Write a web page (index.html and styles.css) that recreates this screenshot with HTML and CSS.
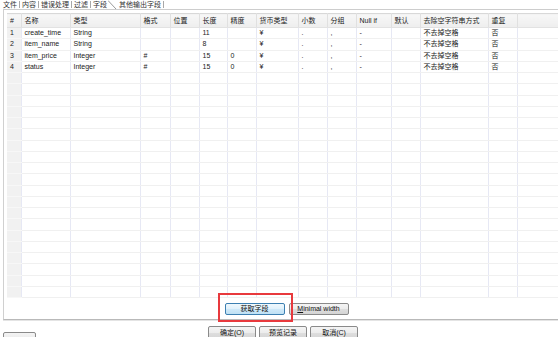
FILE: index.html
```html
<!DOCTYPE html>
<html lang="zh">
<head>
    <meta charset="UTF-8">
    <meta name="viewport" content="width=device-width, initial-scale=1.0">
    <title>字段</title>
    <link rel="stylesheet" href="styles.css">
</head>
<body>

<div class="tabs">
    <span class="tab">文件</span>
    <span class="tab">内容</span>
    <span class="tab">错误处理</span>
    <span class="tab">过滤</span>
    <span class="tab tab-active">字段<svg class="tab-slant" width="9" height="9" viewBox="0 0 9 9"><line x1="0" y1="0.5" x2="8" y2="9" stroke="#9a9a9a" stroke-width="1"/></svg></span>
    <span class="tab">其他输出字段</span>
</div>

<div class="panel">
    <table class="grid" id="fields">
        <colgroup>
            <col style="width:14px"><col style="width:49px"><col style="width:70px"><col style="width:30px">
            <col style="width:29px"><col style="width:28px"><col style="width:29px"><col style="width:42px">
            <col style="width:29px"><col style="width:29px"><col style="width:35px"><col style="width:29px">
            <col style="width:68px"><col style="width:29px"><col style="width:60px">
        </colgroup>
        <thead>
            <tr>
                <th class="num">#</th><th>名称</th><th>类型</th><th>格式</th><th>位置</th><th>长度</th><th>精度</th>
                <th>货币类型</th><th>小数</th><th>分组</th><th>Null if</th><th>默认</th><th>去除空字符串方式</th><th>重复</th><th></th>
            </tr>
        </thead>
        <tbody>
            <tr>
                <td class="num">1</td><td>create_time</td><td>String</td><td></td><td></td><td>11</td><td></td>
                <td>¥</td><td>.</td><td>,</td><td>-</td><td></td><td>不去掉空格</td><td>否</td><td></td>
            </tr>
            <tr>
                <td class="num">2</td><td>item_name</td><td>String</td><td></td><td></td><td>8</td><td></td>
                <td>¥</td><td>.</td><td>,</td><td>-</td><td></td><td>不去掉空格</td><td>否</td><td></td>
            </tr>
            <tr>
                <td class="num">3</td><td>item_price</td><td>Integer</td><td>#</td><td></td><td>15</td><td>0</td>
                <td>¥</td><td>.</td><td>,</td><td>-</td><td></td><td>不去掉空格</td><td>否</td><td></td>
            </tr>
            <tr>
                <td class="num">4</td><td>status</td><td>Integer</td><td>#</td><td></td><td>15</td><td>0</td>
                <td>¥</td><td>.</td><td>,</td><td>-</td><td></td><td>不去掉空格</td><td>否</td><td></td>
            </tr>
        </tbody>
    </table>

    <div class="button-row">
        <span class="marked">
            <button class="btn btn-default">获取字段</button>
        </span>
        <button class="btn"><u>M</u>inimal width</button>
    </div>
</div>

<div class="footer">
    <button class="btn help"></button>
    <div class="footer-buttons">
        <button class="btn wide">确定(O)</button>
        <button class="btn wide">预览记录</button>
        <button class="btn wide">取消(C)</button>
    </div>
</div>

<script>
    // fill the rest of the grid with empty rows
    const body = document.querySelector('#fields tbody');
    for (let i = 0; i < 20; i++) {
        const row = document.createElement('tr');
        for (let c = 0; c < 15; c++) {
            const cell = document.createElement('td');
            if (c === 0) cell.className = 'num';
            row.appendChild(cell);
        }
        body.appendChild(row);
    }
</script>
</body>
</html>
```

FILE: styles.css
```css
html, body {
    overflow: hidden;
}
body {
    margin: 0;
    width: 558px;
    height: 337px;
    background-color: #fff;
    font-family: "Liberation Sans", "Noto Sans CJK SC", sans-serif;
    font-size: 7px;
    color: #222;
}
.tabs {
    display: flex;
    height: 9px;
    padding-left: 1px;
    line-height: 9px;
}
.tab {
    padding: 0 2px;
    border-right: 1px solid #a8a8a8;
    height: 7px;
    line-height: 7px;
    margin-top: 1px;
    color: #333;
}
.tab-active {
    position: relative;
    border-right: none;
    padding-right: 10px;
}
.tab-slant {
    position: absolute;
    right: 0;
    top: -1px;
}
.panel {
    margin-left: 3px;
    border-left: 1px solid #d0d0d0;
    border-top: 1px solid #cdcdcd;
    border-bottom: 1px solid #b9b9b9;
    box-shadow: 0 1px 0 #e4e4e4;
    padding: 3px 0 4px 3px;
}
.grid {
    width: 570px;
    table-layout: fixed;
    border-collapse: collapse;
}
.grid th, .grid td {
    padding: 0 3px;
    text-align: left;
    font-weight: normal;
    white-space: nowrap;
    overflow: hidden;
    line-height: 10px;
}
.grid th {
    height: 13px;
    background: linear-gradient(#f7f7f7, #eeeeee);
    border-top: 1px solid #d8d8d8;
    border-bottom: 1px solid #e2e2e2;
    border-right: 1px solid #e0e0e0;
}
.grid td {
    height: 11.25px;
    box-sizing: border-box;
    border-bottom: 1px solid #f0f0f0;
    border-right: 1px solid #e6e8f4;
}
.grid td.num {
    background-color: #f1f1f1;
    border-bottom-color: #f7f7f7;
}
.button-row {
    display: flex;
    justify-content: center;
    gap: 4px;
    margin-top: 5px;
    padding-left: 8px;
}
.btn {
    height: 12px;
    padding: 0 4px;
    border: 1px solid #8a8a8a;
    border-radius: 2px;
    background: linear-gradient(#f4f4f4 0%, #ececec 50%, #dedede 51%, #d4d4d4 100%);
    font-family: inherit;
    font-size: 7px;
    line-height: 10px;
    color: #111;
}
.btn-default {
    width: 58px;
    border-color: #3c7fb1;
    background: linear-gradient(#f0f8fd 0%, #e0f1fb 50%, #cfe9f8 51%, #bfe1f5 100%);
}
.button-row .btn:last-child {
    width: 60px;
}
.marked {
    position: relative;
    display: flex;
}
.marked::after {
    content: "";
    position: absolute;
    left: -7px;
    top: -10px;
    right: -8px;
    bottom: -7px;
    border: 2px solid #e8393d;
}
.footer {
    display: flex;
    align-items: flex-start;
}
.help {
    width: 33px;
    margin: 12px 0 0 3px;
}
.footer-buttons {
    display: flex;
    gap: 3px;
    margin: 6px 0 0 172px;
}
.wide {
    width: 48px;
    height: 14px;
}
```
